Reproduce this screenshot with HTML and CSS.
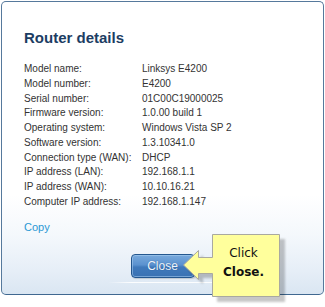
FILE: index.html
```html
<!DOCTYPE html>
<html>
<head>
<meta charset="utf-8">
<link rel="stylesheet" href="styles.css">
</head>
<body>
<div class="dialog">
  <h1 class="title">Router details</h1>
  <div class="details">
    <span>Model name:</span><span>Linksys E4200</span>
    <span>Model number:</span><span>E4200</span>
    <span>Serial number:</span><span>01C00C19000025</span>
    <span>Firmware version:</span><span>1.0.00 build 1</span>
    <span>Operating system:</span><span>Windows Vista SP 2</span>
    <span>Software version:</span><span>1.3.10341.0</span>
    <span>Connection type (WAN):</span><span>DHCP</span>
    <span>IP address (LAN):</span><span>192.168.1.1</span>
    <span>IP address (WAN):</span><span>10.10.16.21</span>
    <span>Computer IP address:</span><span>192.168.1.147</span>
  </div>
  <a class="copy" href="#">Copy</a>
  <div class="actions">
    <button class="close-btn">Close</button>
  </div>
  <div class="sep"></div>
</div>

<svg class="callout-shape" width="110" height="77" viewBox="0 0 110 77">
  <defs>
    <filter id="blur" x="-20%" y="-20%" width="140%" height="140%">
      <feGaussianBlur stdDeviation="1.2"/>
    </filter>
  </defs>
  <polygon filter="url(#blur)" fill="#000" fill-opacity="0.22"
    points="37,9 105,9 105,72 37,72 37,48 23,48 23,54 8,40 23,25 23,32 37,32"/>
  <polygon fill="#ffff9c" stroke="#a9a9a0" stroke-width="1"
    points="32.5,4.5 99.5,4.5 99.5,66.5 32.5,66.5 32.5,43.5 18.5,43.5 18.5,49.5 3.5,35 18.5,20.5 18.5,27.5 32.5,27.5"/>
  <rect x="32" y="28" width="2" height="15" fill="#ffff9c"/>
</svg>
<div class="callout-text">
  <div>Click</div>
  <div class="strong">Close.</div>
</div>
</body>
</html>
```

FILE: styles.css
```css
html, body {
  margin: 0;
  padding: 0;
  background: #ffffff;
}

body {
  width: 325px;
  height: 307px;
  position: relative;
  overflow: hidden;
}

.dialog {
  margin: 1px 0 0 1px;
  width: 323px;
  height: 294px;
  box-sizing: border-box;
  border: 1px solid #56799c;
  border-bottom-color: #3f6890;
  border-radius: 5px;
  padding: 27px 0 0 22px;
  background: linear-gradient(to bottom, #ffffff 0%, #ffffff 66%, #f4f8fc 80%, #e6eef7 92%, #dae6f2 100%);
  font-family: "Liberation Sans", Arial, sans-serif;
  position: relative;
}

.title {
  margin: 0;
  font-size: 15px;
  line-height: 18px;
  font-weight: bold;
  color: #1c3d63;
}

.details {
  margin-top: 15px;
  display: grid;
  grid-template-columns: 118px auto;
  font-size: 10px;
  line-height: 14.75px;
  color: #333333;
}

.copy {
  display: block;
  margin-top: 10px;
  font-size: 11px;
  line-height: 14px;
  color: #2a98d4;
  text-decoration: none;
  width: max-content;
}

.actions {
  display: flex;
  justify-content: center;
  margin-top: 20px;
  margin-left: -22px;
}

.close-btn {
  width: 64px;
  height: 24px;
  box-sizing: border-box;
  border: 1px solid #24578f;
  border-radius: 4px;
  background: linear-gradient(to bottom, #78a9dc 0%, #5b92cf 45%, #3f79bb 55%, #3a72b3 100%);
  box-shadow: inset 0 0 0 1px rgba(170, 205, 240, 0.55), 1px 1px 1px rgba(0, 0, 0, 0.15);
  color: #eef5fc;
  font-family: "Liberation Sans", Arial, sans-serif;
  font-size: 12px;
  line-height: 20px;
  padding: 0;
  text-shadow: 0 0 1px rgba(20, 60, 110, 0.6);
}

.sep {
  margin: 4px 0 0 84px;
  width: 110px;
  height: 1px;
  background: linear-gradient(to right, rgba(255,255,255,0), rgba(255,255,255,0.9) 20%, rgba(255,255,255,0.9));
}

.callout-shape {
  position: absolute;
  left: 180px;
  top: 230px;
}

.callout-text {
  position: absolute;
  left: 212px;
  top: 234px;
  width: 63px;
  padding-top: 10px;
  font-family: "DejaVu Sans", Verdana, sans-serif;
  font-size: 12px;
  line-height: 19px;
  color: #111111;
  text-align: center;
}

.callout-text .strong {
  font-weight: bold;
}
```
